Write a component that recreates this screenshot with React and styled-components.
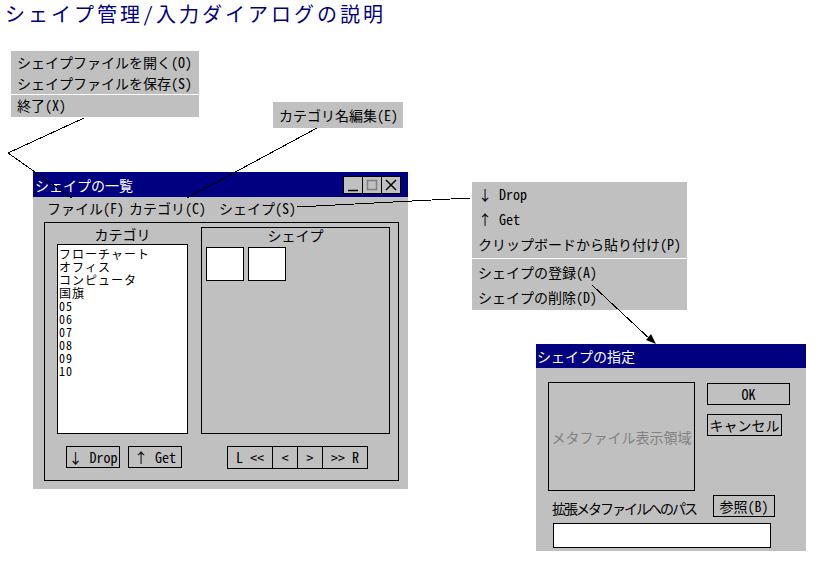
import React from 'react';
import styled, { createGlobalStyle } from 'styled-components';

const FONT = `"Noto Sans Mono CJK JP", "Noto Sans CJK JP", "DejaVu Sans", sans-serif`;

const GlobalStyle = createGlobalStyle`
  html, body { margin: 0; padding: 0; background: #ffffff; }
  body { font-family: ${FONT}; font-size: 14px; color: #000000; }
  *, *::before, *::after { box-sizing: border-box; }
`;

const Canvas = styled.div`
  position: relative;
  width: 815px;
  height: 562px;
  overflow: hidden;
  background: #ffffff;
`;

const PageTitle = styled.h1`
  margin: 0;
  padding: 2px 0 0 5px;
  font-size: 20px;
  line-height: 24px;
  font-weight: normal;
  color: #000080;
  letter-spacing: 3px;
  white-space: nowrap;
`;

/* ---------- floating popup menus ---------- */
const PopupMenu = styled.ul`
  position: absolute;
  left: ${(p) => p.$x}px;
  top: ${(p) => p.$y}px;
  width: ${(p) => p.$w}px;
  margin: 0;
  padding: ${(p) => p.$pad || '0'};
  list-style: none;
  background: #c0c0c0;
`;

const MenuItem = styled.li`
  height: ${(p) => p.$h}px;
  line-height: ${(p) => p.$h}px;
  padding-left: 6px;
  white-space: nowrap;
  font-size: 14px;
`;

const MenuSeparator = styled.li`
  height: 1px;
  margin: ${(p) => p.$m || '0'};
  background: #ffffff;
`;

/* ---------- windows ---------- */
const Window = styled.section`
  position: absolute;
  left: ${(p) => p.$x}px;
  top: ${(p) => p.$y}px;
  width: ${(p) => p.$w}px;
  background: #c0c0c0;
`;

const TitleBar = styled.header`
  display: flex;
  align-items: center;
  justify-content: space-between;
  height: ${(p) => p.$h}px;
  padding: 0 7px 0 ${(p) => p.$pl}px;
  background: #000080;
  color: #ffffff;
  font-size: 14px;
  white-space: nowrap;
`;

const Controls = styled.div`
  display: flex;
`;

const ControlButton = styled.div`
  width: 20px;
  height: 18px;
  margin-left: -1px;
  border: 1px solid #000000;
  background: #c0c0c0;
  display: flex;
  align-items: center;
  justify-content: center;
  &:first-child { margin-left: 0; }
`;

const MenuBar = styled.nav`
  display: flex;
  height: 22px;
  line-height: 22px;
  padding-left: 14px;
  font-size: 14px;
  white-space: nowrap;
`;

const MenuBarItem = styled.span`
  margin-left: ${(p) => p.$gap || 0}px;
`;

const GroupFrame = styled.div`
  margin: 3px 9px 8px 11px;
  border: 1px solid #000000;
  display: grid;
  grid-template-columns: 131px 189px;
  column-gap: 13px;
  row-gap: 12px;
  padding: 4px 8px 11px 12px;
`;

const CategoryColumn = styled.div`
  display: flex;
  flex-direction: column;
`;

const ColumnLabel = styled.div`
  height: 17px;
  line-height: 14px;
  text-align: center;
  font-size: 14px;
`;

const ListBox = styled.ul`
  height: 190px;
  margin: 0;
  padding: 2px 0 0 1px;
  list-style: none;
  background: #ffffff;
  border: 1px solid #000000;
  font-size: 12px;
  line-height: 13px;
  letter-spacing: 1px;
`;

const ListItem = styled.li`
  height: 13px;
  white-space: nowrap;
`;

const ShapeBox = styled.div`
  border: 1px solid #000000;
`;

const ShapeLabel = styled.div`
  height: 19px;
  line-height: 14px;
  text-align: center;
  font-size: 14px;
`;

const ThumbRow = styled.div`
  display: flex;
  gap: 4px;
  padding-left: 4px;
`;

const Thumb = styled.div`
  width: 38px;
  height: 34px;
  background: #ffffff;
  border: 1px solid #000000;
`;

const ButtonRow = styled.div`
  display: flex;
  justify-content: center;
  gap: 8px;
  padding-left: ${(p) => p.$pl || 0}px;
`;

const PushButton = styled.button`
  width: ${(p) => p.$w}px;
  height: ${(p) => p.$h || 22}px;
  margin: 0;
  padding: 0;
  border: 1px solid #000000;
  background: #c0c0c0;
  color: #000000;
  font-family: ${FONT};
  font-size: 14px;
  line-height: 20px;
  white-space: pre;
  text-align: center;
`;

const NavGroup = styled.div`
  display: flex;
  height: 23px;
  border: 1px solid #000000;
`;

const NavSegment = styled.div`
  width: ${(p) => p.$w}px;
  line-height: 21px;
  font-size: 14px;
  text-align: center;
  white-space: pre;
  & + & { border-left: 1px solid #000000; }
`;

/* ---------- dialog ---------- */
const DialogBody = styled.div`
  height: 183px;
  padding: 14px 0 0 12px;
`;

const DialogTop = styled.div`
  display: flex;
  align-items: flex-start;
`;

const MetaArea = styled.div`
  width: 147px;
  height: 109px;
  border: 1px solid #000000;
  display: flex;
  align-items: center;
  justify-content: center;
  color: #808080;
  font-size: 14px;
  white-space: nowrap;
`;

const DialogButtons = styled.div`
  display: flex;
  flex-direction: column;
  gap: 9px;
  margin-left: 12px;
  padding-top: 1px;
`;

const PathRow = styled.div`
  display: grid;
  grid-template-columns: 165px 62px;
  align-items: center;
  margin-top: 2px;
`;

const PathLabel = styled.div`
  padding: 5px 0 0 4px;
  font-size: 14px;
  letter-spacing: -2px;
  white-space: nowrap;
`;

const PathField = styled.div`
  width: 218px;
  height: 25px;
  margin: 5px 0 0 5px;
  background: #ffffff;
  border: 1px solid #000000;
`;

const Connectors = styled.svg`
  position: absolute;
  left: 0;
  top: 0;
  pointer-events: none;
`;

const categories = ['フローチャート', 'オフィス', 'コンピュータ', '国旗', '05', '06', '07', '08', '09', '10'];

export default function App() {
  return (
    <>
      <GlobalStyle />
      <Canvas>
        <PageTitle>シェイプ管理/入力ダイアログの説明</PageTitle>

        <PopupMenu $x={11} $y={51} $w={188} $pad="1px 0">
          <MenuItem $h={21}>シェイプファイルを開く(O)</MenuItem>
          <MenuItem $h={21}>シェイプファイルを保存(S)</MenuItem>
          <MenuSeparator />
          <MenuItem $h={21}>終了(X)</MenuItem>
        </PopupMenu>

        <PopupMenu $x={273} $y={102} $w={130}>
          <MenuItem $h={26}>カテゴリ名編集(E)</MenuItem>
        </PopupMenu>

        <PopupMenu $x={472} $y={182} $w={215}>
          <MenuItem $h={25}>↓ Drop</MenuItem>
          <MenuItem $h={25}>↑ Get</MenuItem>
          <MenuItem $h={25}>クリップボードから貼り付け(P)</MenuItem>
          <MenuSeparator $m="1px 0" />
          <MenuItem $h={25}>シェイプの登録(A)</MenuItem>
          <MenuItem $h={25}>シェイプの削除(D)</MenuItem>
        </PopupMenu>

        <Window $x={33} $y={172} $w={375}>
          <TitleBar $h={25} $pl={2}>
            <span>シェイプの一覧</span>
            <Controls>
              <ControlButton>
                <svg width="14" height="14" viewBox="0 0 14 14">
                  <line x1="2" y1="12.5" x2="12" y2="12.5" stroke="#000" strokeWidth="1.5" />
                </svg>
              </ControlButton>
              <ControlButton>
                <svg width="12" height="12" viewBox="0 0 12 12">
                  <rect x="1.5" y="1.5" width="9" height="9" fill="none" stroke="#808080" strokeWidth="1.5" />
                </svg>
              </ControlButton>
              <ControlButton>
                <svg width="12" height="12" viewBox="0 0 12 12">
                  <line x1="1" y1="1" x2="11" y2="11" stroke="#000" strokeWidth="1.4" />
                  <line x1="11" y1="1" x2="1" y2="11" stroke="#000" strokeWidth="1.4" />
                </svg>
              </ControlButton>
            </Controls>
          </TitleBar>
          <MenuBar>
            <MenuBarItem>ファイル(F)</MenuBarItem>
            <MenuBarItem $gap={5}>カテゴリ(C)</MenuBarItem>
            <MenuBarItem $gap={13}>シェイプ(S)</MenuBarItem>
          </MenuBar>
          <GroupFrame>
            <CategoryColumn>
              <ColumnLabel>カテゴリ</ColumnLabel>
              <ListBox>
                {categories.map((c) => (
                  <ListItem key={c}>{c}</ListItem>
                ))}
              </ListBox>
            </CategoryColumn>
            <ShapeBox>
              <ShapeLabel>シェイプ</ShapeLabel>
              <ThumbRow>
                <Thumb />
                <Thumb />
              </ThumbRow>
            </ShapeBox>
            <ButtonRow $pl={3}>
              <PushButton $w={54}>↓ Drop</PushButton>
              <PushButton $w={54}>↑ Get</PushButton>
            </ButtonRow>
            <ButtonRow $pl={4}>
              <NavGroup>
                <NavSegment $w={44}>L &lt;&lt;</NavSegment>
                <NavSegment $w={25}>&lt;</NavSegment>
                <NavSegment $w={25}>&gt;</NavSegment>
                <NavSegment $w={45}>&gt;&gt; R</NavSegment>
              </NavGroup>
            </ButtonRow>
          </GroupFrame>
        </Window>

        <Window $x={536} $y={344} $w={270}>
          <TitleBar $h={24} $pl={1}>
            <span>シェイプの指定</span>
          </TitleBar>
          <DialogBody>
            <DialogTop>
              <MetaArea>メタファイル表示領域</MetaArea>
              <DialogButtons>
                <PushButton $w={83}>OK</PushButton>
                <PushButton $w={75}>キャンセル</PushButton>
              </DialogButtons>
            </DialogTop>
            <PathRow>
              <PathLabel>拡張メタファイルへのパス</PathLabel>
              <PushButton $w={62}>参照(B)</PushButton>
            </PathRow>
            <PathField />
          </DialogBody>
        </Window>

        <Connectors width="815" height="562" viewBox="0 0 815 562">
          <g stroke="#000" strokeWidth="1" fill="none" shapeRendering="crispEdges">
            <polyline points="84,118 8,153 72,198" />
            <line x1="317" y1="128" x2="187" y2="198" />
            <line x1="297" y1="207" x2="470" y2="198" />
            <line x1="592" y1="285" x2="652" y2="341" />
          </g>
          <polygon points="656,344 646,340 651,334" fill="#000" />
        </Connectors>
      </Canvas>
    </>
  );
}
